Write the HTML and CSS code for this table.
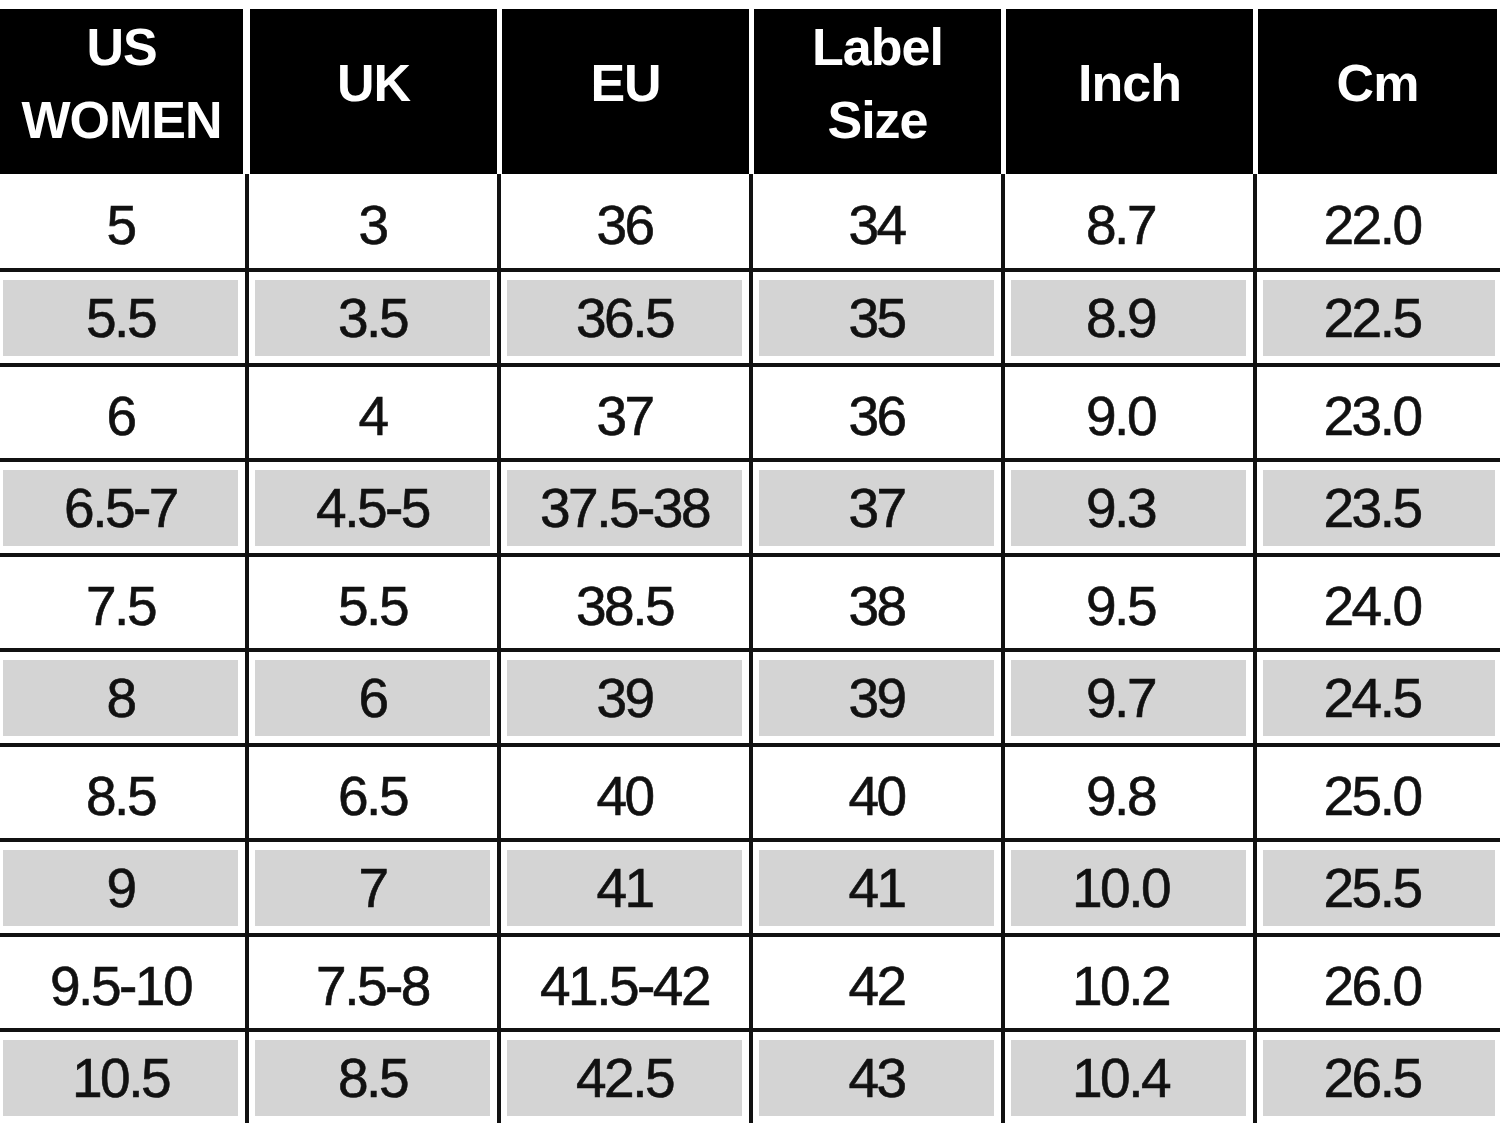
FILE: index.html
```html
<!DOCTYPE html>
<html>
<head>
<meta charset="utf-8">
<link rel="stylesheet" href="styles.css">
</head>
<body>
<div class="chart">
  <div class="head">
    <div class="hc first">US<br>WOMEN</div>
    <div class="hc">UK</div>
    <div class="hc">EU</div>
    <div class="hc">Label<br>Size</div>
    <div class="hc">Inch</div>
    <div class="hc last">Cm</div>
  </div>
  <div class="row"><div class="c">5</div><div class="c">3</div><div class="c">36</div><div class="c">34</div><div class="c">8.7</div><div class="c">22.0</div></div>
  <div class="row gray"><div class="c">5.5</div><div class="c">3.5</div><div class="c">36.5</div><div class="c">35</div><div class="c">8.9</div><div class="c">22.5</div></div>
  <div class="row"><div class="c">6</div><div class="c">4</div><div class="c">37</div><div class="c">36</div><div class="c">9.0</div><div class="c">23.0</div></div>
  <div class="row gray"><div class="c">6.5-7</div><div class="c">4.5-5</div><div class="c">37.5-38</div><div class="c">37</div><div class="c">9.3</div><div class="c">23.5</div></div>
  <div class="row"><div class="c">7.5</div><div class="c">5.5</div><div class="c">38.5</div><div class="c">38</div><div class="c">9.5</div><div class="c">24.0</div></div>
  <div class="row gray"><div class="c">8</div><div class="c">6</div><div class="c">39</div><div class="c">39</div><div class="c">9.7</div><div class="c">24.5</div></div>
  <div class="row"><div class="c">8.5</div><div class="c">6.5</div><div class="c">40</div><div class="c">40</div><div class="c">9.8</div><div class="c">25.0</div></div>
  <div class="row gray"><div class="c">9</div><div class="c">7</div><div class="c">41</div><div class="c">41</div><div class="c">10.0</div><div class="c">25.5</div></div>
  <div class="row"><div class="c">9.5-10</div><div class="c">7.5-8</div><div class="c">41.5-42</div><div class="c">42</div><div class="c">10.2</div><div class="c">26.0</div></div>
  <div class="row gray"><div class="c">10.5</div><div class="c">8.5</div><div class="c">42.5</div><div class="c">43</div><div class="c">10.4</div><div class="c">26.5</div></div>
</div>
</body>
</html>
```
FILE: styles.css
```css
html, body {
  margin: 0;
  padding: 0;
  background: #ffffff;
}

.chart {
  width: 1500px;
  height: 1131px;
  padding-top: 9px;
  box-sizing: border-box;
  font-family: "Liberation Sans", Arial, sans-serif;
}

.head,
.row {
  display: grid;
  grid-template-columns: 245px 252px 252px 252px 252px 247px;
}

.head {
  height: 165px;
}

.hc {
  background: #000;
  color: #fff;
  font-weight: bold;
  font-size: 52px;
  line-height: 73px;
  letter-spacing: -1px;
  display: flex;
  align-items: center;
  justify-content: center;
  text-align: center;
  padding-bottom: 16px;
  border-left: 5px solid #fff;
  background-clip: padding-box;
}

.hc.first {
  border-left: 0;
  margin-right: 2px;
}

.hc.last {
  margin-right: 3px;
}

.row {
  height: 95px;
  border-top: 4px solid #111;
  box-sizing: border-box;
}

.head + .row {
  border-top: 0;
  height: 94px;
}

.c {
  display: flex;
  align-items: center;
  justify-content: center;
  font-size: 55px;
  letter-spacing: -2.5px;
  color: #111;
  -webkit-text-stroke: 0.6px #111;
  border-left: 4px solid #111;
  padding: 12px 7px 5px 6px;
  background-clip: content-box;
}

.c:first-child {
  border-left: 0;
  padding-left: 3px;
}

.c:last-child {
  padding-right: 5px;
}

.gray .c {
  padding-top: 8px;
  padding-bottom: 7px;
  background-color: #d4d4d4;
}

.c:nth-child(5) > *,
.c:nth-child(5) {
  text-indent: -16px;
}

.c:nth-child(6) {
  text-indent: -14px;
}
```
